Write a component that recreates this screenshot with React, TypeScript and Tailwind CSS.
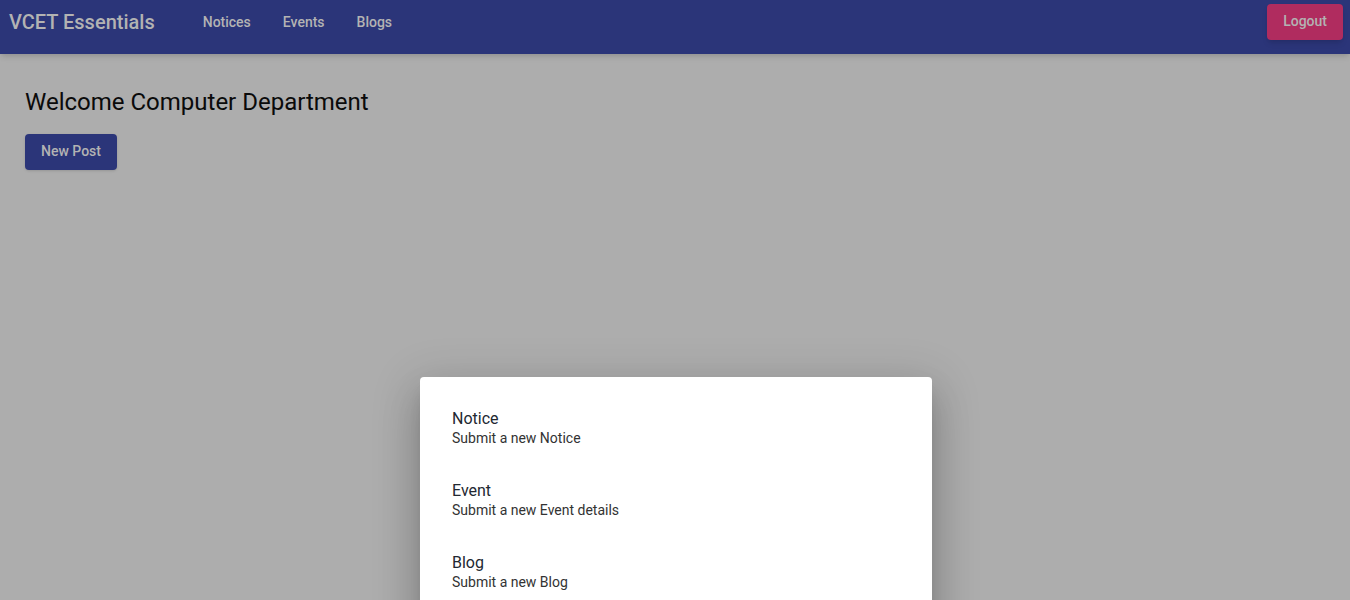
export default function App() {
  return (
    <div className="relative min-h-[600px] h-[600px] overflow-hidden bg-[#adadad]" style={{ fontFamily: "Roboto, 'Liberation Sans', sans-serif" }}>
      <header className="h-[54px] bg-[#2b3579] shadow-md">
        <div className="flex h-[44px] items-center pl-[9px] pr-[7px]">
          <div className="text-[20px] font-medium text-[#b3b3b3]">VCET Essentials</div>
          <nav className="ml-8 flex items-center">
            <span className="px-4 text-[14px] font-medium text-[#b3b3b3]">Notices</span>
            <span className="px-4 text-[14px] font-medium text-[#b3b3b3]">Events</span>
            <span className="px-4 text-[14px] font-medium text-[#b3b3b3]">Blogs</span>
          </nav>
          <div className="ml-auto">
            <button className="h-9 rounded px-4 pb-[2px] text-[14px] font-medium text-[#b3b3b3] bg-[#b02c5f] shadow-md">Logout</button>
          </div>
        </div>
      </header>
      <main className="px-[25px] pt-[32px]">
        <h1 className="text-[24px] leading-[32px] text-[#0a0a0a]">Welcome Computer Department</h1>
        <button className="mt-[16px] h-9 rounded px-4 pb-[2px] text-[14px] font-medium text-[#b3b3b3] bg-[#2b3579] shadow">New Post</button>
      </main>
      <div className="absolute left-[420px] top-[377px] w-[512px] h-[260px] rounded bg-white shadow-[0_11px_15px_-7px_rgba(0,0,0,0.2),0_24px_38px_3px_rgba(0,0,0,0.14),0_9px_46px_8px_rgba(0,0,0,0.12)] pt-[15px] px-4">
        {[
          ["Notice", "Submit a new Notice"],
          ["Event", "Submit a new Event details"],
          ["Blog", "Submit a new Blog"],
        ].map(([t, s]) => (
          <div key={t} className="px-4 py-2">
            <div className="my-[9px]">
              <div className="text-[16px] leading-[20px] text-[#222831]">{t}</div>
              <div className="text-[14px] leading-[18px] text-[#333333]">{s}</div>
            </div>
          </div>
        ))}
      </div>
    </div>
  );
}
